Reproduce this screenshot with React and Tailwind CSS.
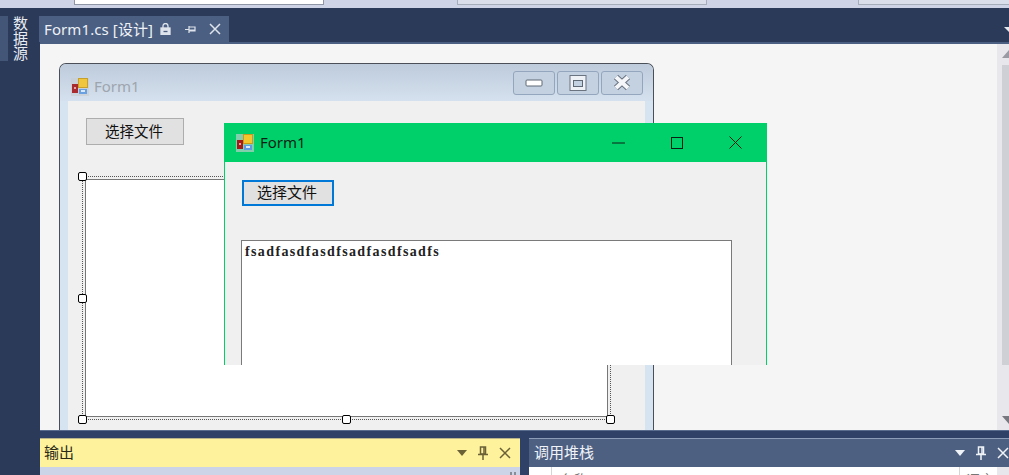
const cjk = { fontFamily: '"Noto Sans CJK SC", "Noto Sans", sans-serif' };

// little app icon used by both form title bars
function FormIcon({ faded }) {
  return (
    <svg width="18" height="18" viewBox="0 0 18 18" className={faded ? "shrink-0 opacity-90" : "shrink-0"}>
      <rect x="0" y="0" width="18" height="18" fill="#c9ccd0" opacity="0.65" />
      <rect x="1" y="6" width="6" height="9" fill="#a5191b" />
      <rect x="3" y="9" width="2" height="2" fill="#e8a0a0" />
      <rect x="7.500" y="0.500" width="9" height="9" fill="#f5c52c" stroke="#c89a18" />
      <rect x="8" y="11" width="8" height="5" fill="#5f9be0" />
      <rect x="10" y="12" width="4" height="2" fill="#dbe8f8" />
    </svg>
  );
}

function Handle({ className }) {
  return <div className={`absolute w-[9px] h-[9px] bg-white border-[1.5px] border-black rounded-[2px] ${className}`} />;
}

function XpButton({ children }) {
  return (
    <div className="w-[42px] h-[24px] flex items-center justify-center rounded-[3px] border border-[#94a6bd] bg-[#c4d1e0]">
      {children}
    </div>
  );
}

function PanelControls({ color }) {
  return (
    <div className="flex items-center gap-[11px]">
      <svg width="10" height="6" viewBox="0 0 10 6"><path d="M0 0h10L5 6z" fill={color} /></svg>
      <svg width="10" height="14" viewBox="0 0 10 14" fill="none" stroke={color} strokeWidth="1.5">
        <path d="M2.500 1h5v7h-5z" />
        <path d="M6 1v7" />
        <path d="M0 8.500h10M5 9v5" />
      </svg>
      <svg width="12" height="12" viewBox="0 0 12 12" fill="none" stroke={color} strokeWidth="1.5">
        <path d="M1 1l10 10M11 1L1 11" />
      </svg>
    </div>
  );
}

export default function App() {
  return (
    <div className="w-[1009px] h-[475px] overflow-hidden flex flex-col bg-[#2a3a58]" style={cjk}>
      {/* toolbar remains at the very top */}
      <div className="h-2 shrink-0 bg-[#ced4e6] relative">
        <div className="absolute left-[74px] top-0 w-[250px] h-[5px] bg-white border border-t-0 border-[#8f97a6]" />
        <div className="absolute left-[457px] top-0 w-[250px] h-[5px] bg-[#d9deea] border-b border-x border-[#a5acba]" />
        <div className="absolute left-[858px] top-0 w-[151px] h-[5px] bg-[#d9deea] border-b border-l border-[#a5acba]" />
      </div>

      <div className="flex-1 flex min-h-0">
        {/* left tool strip */}
        <div className="w-10 shrink-0 pt-2 flex items-start">
          <div className="w-2 h-[45px] bg-[#435678]" />
          <div
            className="ml-1 text-[15px] leading-[16px] h-[46px] text-[#e8ecf3]"
            style={{ writingMode: "vertical-rl" }}
          >
            数据源
          </div>
        </div>

        <div className="flex-1 min-w-0 flex flex-col">
          {/* document tabs */}
          <div className="h-9 shrink-0 pt-2 flex items-end justify-between border-b-2 border-[#4b5f82]">
            <div className="h-[26px] w-[190px] -ml-px bg-[#4b5f82] flex items-center pl-[5px] text-[#eef1f6]">
              <span className="text-[15px] whitespace-nowrap tracking-[0.1px]" style={{ fontFamily: '"Noto Sans", "Noto Sans CJK SC", sans-serif' }}>
                Form1.cs [设计]
              </span>
              <svg className="ml-[7px]" width="11" height="12" viewBox="0 0 11 12" fill="none" stroke="#dfe4ec" strokeWidth="1.3">
                <path d="M3 5V3a2.500 2.500 0 0 1 5 0v2" />
                <rect x="1" y="5" width="9" height="6.500" fill="#dfe4ec" />
                <path d="M3.500 8.500h4" stroke="#4b5f82" />
              </svg>
              <svg className="ml-[14px]" width="11" height="9" viewBox="0 0 11 9" fill="none" stroke="#dfe4ec" strokeWidth="1.2">
                <path d="M0 4.500h4M4 1v7M4 2h6v4H4M4 5h6" />
              </svg>
              <svg className="ml-[13px]" width="12" height="12" viewBox="0 0 12 12" fill="none" stroke="#dfe4ec" strokeWidth="1.5">
                <path d="M1 1l10 10M11 1L1 11" />
              </svg>
            </div>
            <svg className="mb-[10px]" width="5" height="5" viewBox="0 0 5 5"><path d="M0 0h5v5z" fill="#e4e8ef" /></svg>
          </div>

          {/* designer surface */}
          <div className="relative h-[386px] shrink-0 bg-[#f5f5f5] flex overflow-hidden">
            <div className="flex-1 pl-[19px] pt-[19px]">
              <div className="w-[595px] h-[400px] rounded-t-[7px] border border-[#4a4f58] border-b-0 bg-[#d6e3f1] overflow-hidden">
                <div className="h-[37px] pl-[11px] pr-[10px] flex items-center justify-between bg-gradient-to-b from-[#becbdb] to-[#d5e1ee]">
                  <div className="flex items-center gap-[5px] mt-2">
                    <FormIcon faded />
                    <span className="text-[15px] text-[#9ea5ae]" style={{ fontFamily: '"Noto Sans", sans-serif' }}>Form1</span>
                  </div>
                  <div className="flex gap-[2px]">
                    <XpButton>
                      <svg width="18" height="8" viewBox="0 0 18 8"><rect x="1" y="1" width="16" height="6" rx="1" fill="#fff" stroke="#5f6875" /></svg>
                    </XpButton>
                    <XpButton>
                      <svg width="18" height="16" viewBox="0 0 18 16">
                        <rect x="1" y="0.500" width="16" height="15" fill="#eef1f5" stroke="#6a7380" />
                        <rect x="4.500" y="5.500" width="9" height="6" fill="#c4d1e0" stroke="#5f6875" />
                      </svg>
                    </XpButton>
                    <XpButton>
                      <svg width="20" height="17" viewBox="0 0 20 17">
                        <path d="M4 3l12 11M16 3L4 14" fill="none" stroke="#6a7380" strokeWidth="6" />
                        <path d="M4 3l12 11M16 3L4 14" fill="none" stroke="#f4f6f9" strokeWidth="4" />
                      </svg>
                    </XpButton>
                  </div>
                </div>

                <div className="mx-2 h-[400px] bg-[#f0f0f0] pt-[17px] pl-[14px]">
                  <div className="ml-1 w-[98px] h-[27px] pb-px flex items-center justify-center bg-[#e1e1e1] border border-[#adadad] text-[14.500px] leading-none text-[#111]">
                    <span className="-ml-0.5">选择文件</span>
                  </div>
                  {/* selected panel */}
                  <div className="relative mt-[31px] w-[529px] h-[244px] border border-dotted border-[#555] p-[2px]">
                    <div className="w-full h-full bg-white border border-[#777]" />
                    <Handle className="-left-[5px] -top-[5px]" />
                    <Handle className="-left-[5px] top-[117px]" />
                    <Handle className="-left-[5px] -bottom-[5px]" />
                    <Handle className="left-[259px] -bottom-[5px]" />
                    <Handle className="-right-[5px] -bottom-[5px]" />
                  </div>
                </div>
              </div>
            </div>

            {/* scrollbar */}
            <div className="w-3 shrink-0 bg-[#e8e8ec] flex flex-col items-end pt-[6px] pb-[6px]">
              <svg width="7" height="8" viewBox="0 0 7 8"><path d="M7 0v8H0z" fill="#9a9aa4" /></svg>
              <div className="w-[7px] h-[300px] mt-[7px] bg-[#cfcfd6]" />
              <div className="flex-1" />
              <svg width="7" height="8" viewBox="0 0 7 8"><path d="M0 0h7v8z" fill="#77777f" /></svg>
            </div>

            {/* the running form sits on top of the designer */}
            <div className="absolute left-[184px] top-[79px] w-[543px] h-[242px] bg-[#f0f0f0] border-x border-[#00d06a] overflow-hidden">
              <div className="h-[39px] -mx-px bg-[#00d06a] flex items-center pl-[12px] text-[#0c1f14]">
                <FormIcon />
                <span className="ml-[6px] text-[15px]" style={{ fontFamily: '"Noto Sans", sans-serif' }}>Form1</span>
                <div className="flex-1" />
                <svg className="mr-[46px]" width="13" height="2" viewBox="0 0 13 2"><path d="M0 1h13" stroke="#0c1f14" /></svg>
                <svg className="mr-[46px]" width="12" height="12" viewBox="0 0 12 12"><rect x="0.500" y="0.500" width="11" height="11" fill="none" stroke="#0c1f14" /></svg>
                <svg className="mr-[25px]" width="13" height="13" viewBox="0 0 13 13"><path d="M0.500 0.500l12 12M12.500 0.500l-12 12" stroke="#0c1f14" /></svg>
              </div>
              <div className="pt-[18px] pl-[16px]">
                <div className="ml-px w-[92px] h-[26px] pb-[3px] flex items-center justify-center bg-[#e1e1e1] border-2 border-[#0078d7] text-[15px] leading-none text-[#111]">
                  <span className="-ml-0.5">选择文件</span>
                </div>
                <div
                  className="mt-[34px] w-[491px] h-[140px] bg-white border border-[#7a7a7a] pl-[3px] pt-[3px] text-[14px] leading-[16px] font-bold tracking-[1.37px] text-[#222]"
                  style={{ fontFamily: '"Liberation Serif", serif' }}
                >
                  fsadfasdfasdfsadfasdfsadfs
                </div>
              </div>
            </div>
          </div>

          {/* tool windows docked at the bottom */}
          <div className="flex-1 min-h-0 bg-[#2f4166] border-t border-[#5a6c8e] pt-[7px] flex gap-[9px] overflow-hidden">
            <div className="w-[480px] shrink-0 flex flex-col">
              <div className="h-[29px] shrink-0 bg-[#fff29d] border-t border-[#b9b48a] flex items-center justify-between pl-[4px] pr-[9px] text-[#2a2a18]">
                <span className="text-[15px] leading-none pb-[3px]">输出</span>
                <PanelControls color="#6b6137" />
              </div>
              <div className="flex-1 bg-[#ccd5e8] flex justify-end pr-1 pt-[5px]">
                <svg width="6" height="8" viewBox="0 0 6 8" fill="none" stroke="#444" strokeWidth="1"><path d="M1 0v8M5 0v8M1 4h4" /></svg>
              </div>
            </div>
            <div className="flex-1 min-w-0 flex flex-col">
              <div className="h-[29px] shrink-0 bg-[#4d6082] border-t border-[#8b9cb8] flex items-center justify-between pl-[5px] text-[#f0f3f8]">
                <span className="text-[15px] leading-none pb-[3px]">调用堆栈</span>
                <PanelControls color="#f0f3f8" />
              </div>
              <div className="flex-1 bg-white overflow-hidden flex text-[14px] leading-[14px] text-[#777]">
                <div className="w-[23px] border-r border-[#d5d5d5]" />
                <div className="flex-1 pl-2 pt-[5px]">名称</div>
                <div className="w-[38px] border-l border-[#d5d5d5] pl-[6px] pt-[5px]">语言</div>
                <div className="w-3 bg-[#e8e8ec]" />
              </div>
            </div>
          </div>
        </div>
      </div>
    </div>
  );
}
